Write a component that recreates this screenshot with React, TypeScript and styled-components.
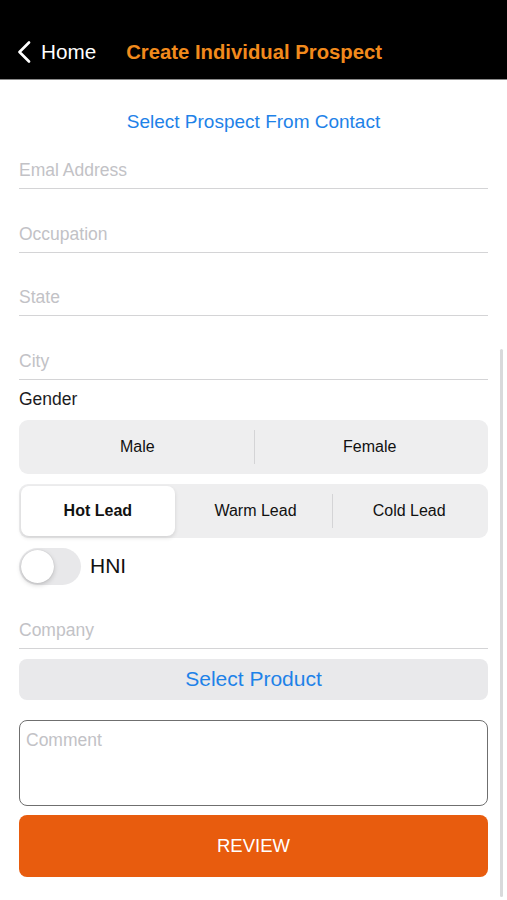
import React from "react";
import styled, { createGlobalStyle } from "styled-components";

const Global = createGlobalStyle`
  html, body { margin: 0; padding: 0; background: #ffffff; }
  body { font-family: "Liberation Sans", Arial, sans-serif; }
  * { box-sizing: border-box; }
`;

const Page = styled.div`
  position: relative;
  width: 507px;
  height: 900px;
  overflow: hidden;
  background: #fff;
`;

const NavBar = styled.header`
  height: 80px;
  background: #000;
  border-bottom: 1px solid #8a8a8a;
  display: flex;
  align-items: flex-end;
  padding: 0 0 15px 17px;
`;

const Back = styled.div`
  display: flex;
  align-items: center;
  gap: 10px;
  color: #fff;
  font-size: 20.7px;
  height: 24px;
`;

const Title = styled.div`
  margin-left: 30px;
  color: #f28a1c;
  font-size: 20.3px;
  font-weight: bold;
  height: 24px;
  line-height: 24px;
`;

const Form = styled.main`
  padding: 30px 19px 0 19px;
  display: flex;
  flex-direction: column;
`;

const LinkRow = styled.div`
  text-align: center;
  color: #1e82e8;
  font-size: 19px;
  line-height: 24px;
`;

const Field = styled.div<{ $top: number }>`
  margin-top: ${(p) => p.$top}px;
  height: 41px;
  border-bottom: 1.5px solid #d4d4d6;
  display: flex;
  align-items: flex-end;
  padding-bottom: 7px;
  color: #c2c2c6;
  font-size: 17.5px;
`;

const Label = styled.div`
  margin-top: 8px;
  font-size: 17.5px;
  color: #1c1c1e;
  line-height: 22px;
`;

const Segmented = styled.div<{ $top: number }>`
  margin-top: ${(p) => p.$top}px;
  height: 54px;
  background: #eeeeef;
  border-radius: 9px;
  display: flex;
  align-items: stretch;
  padding: 2px;
`;

const Segment = styled.div<{ $selected?: boolean; $divider?: boolean }>`
  flex: 1;
  display: flex;
  align-items: center;
  justify-content: center;
  font-size: 16px;
  color: #111;
  font-weight: ${(p) => (p.$selected ? "bold" : "normal")};
  background: ${(p) => (p.$selected ? "#fff" : "transparent")};
  border-radius: 8px;
  margin-right: ${(p) => (p.$selected ? "4px" : "0")};
  box-shadow: ${(p) => (p.$selected ? "0 2px 4px rgba(0,0,0,0.12)" : "none")};
  position: relative;
  &::before {
    content: "";
    display: ${(p) => (p.$divider ? "block" : "none")};
    position: absolute;
    left: 0;
    top: 8px;
    bottom: 8px;
    width: 1px;
    background: #d4d4d6;
  }
`;

const ToggleRow = styled.div`
  margin-top: 10px;
  display: flex;
  align-items: center;
  gap: 9px;
`;

const Track = styled.div`
  width: 62px;
  height: 37px;
  border-radius: 19px;
  background: #e8e8ea;
  padding: 2px;
  display: flex;
`;

const Knob = styled.div`
  width: 33px;
  height: 33px;
  border-radius: 50%;
  background: #fff;
  box-shadow: 0 2px 5px rgba(0, 0, 0, 0.18), 0 0 1px rgba(0, 0, 0, 0.2);
`;

const ToggleText = styled.div`
  font-size: 21px;
  color: #111;
`;

const ProductButton = styled.div`
  margin-top: 10px;
  height: 41px;
  border-radius: 8px;
  background: #e9e9eb;
  color: #1e82e8;
  font-size: 21px;
  display: flex;
  align-items: center;
  justify-content: center;
`;

const Comment = styled.div`
  margin-top: 20px;
  height: 86px;
  border: 1.5px solid #6f6f6f;
  border-radius: 8px;
  padding: 10px 6px;
  color: #c2c2c6;
  font-size: 17.5px;
  line-height: 19px;
`;

const Review = styled.div`
  margin-top: 9px;
  height: 62px;
  border-radius: 8px;
  background: #e85c0e;
  color: #fff;
  font-size: 18.5px;
  display: flex;
  align-items: center;
  justify-content: center;
`;

const ScrollIndicator = styled.div`
  position: absolute;
  right: 4px;
  top: 349px;
  bottom: 3px;
  width: 3px;
  border-radius: 2px;
  background: #d9d9db;
`;

export default function App() {
  return (
    <Page>
      <Global />
      <NavBar>
        <Back>
          <svg width="14" height="22" viewBox="0 0 14 22">
            <path d="M12 1.5 L2.5 11 L12 20.5" fill="none" stroke="#fff" strokeWidth="2.6" strokeLinecap="round" strokeLinejoin="round" />
          </svg>
          <span>Home</span>
        </Back>
        <Title>Create Individual Prospect</Title>
      </NavBar>
      <Form>
        <LinkRow>Select Prospect From Contact</LinkRow>
        <Field $top={14}>Emal Address</Field>
        <Field $top={22.5}>Occupation</Field>
        <Field $top={22.5}>State</Field>
        <Field $top={22.5}>City</Field>
        <Label>Gender</Label>
        <Segmented $top={10}>
          <Segment>Male</Segment>
          <Segment $divider>Female</Segment>
        </Segmented>
        <Segmented $top={10}>
          <Segment $selected>Hot Lead</Segment>
          <Segment>Warm Lead</Segment>
          <Segment $divider>Cold Lead</Segment>
        </Segmented>
        <ToggleRow>
          <Track>
            <Knob />
          </Track>
          <ToggleText>HNI</ToggleText>
        </ToggleRow>
        <Field $top={23}>Company</Field>
        <ProductButton>Select Product</ProductButton>
        <Comment>Comment</Comment>
        <Review>REVIEW</Review>
      </Form>
      <ScrollIndicator />
    </Page>
  );
}
